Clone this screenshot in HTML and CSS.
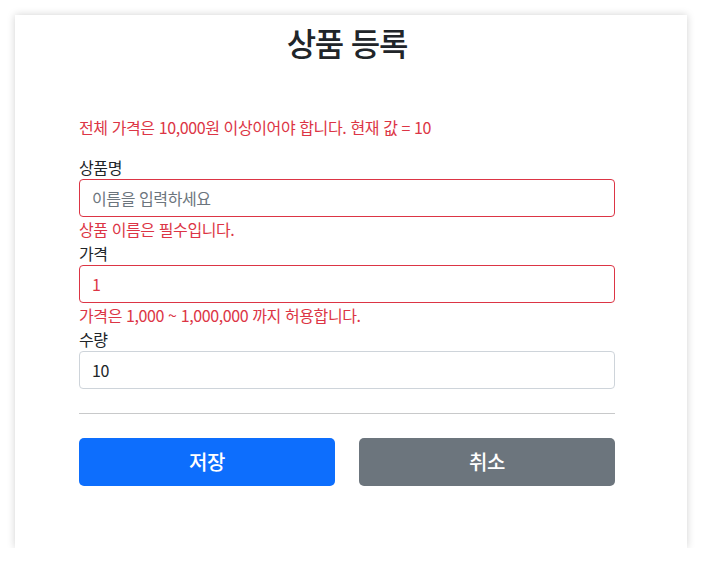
FILE: index.html
```html
<!DOCTYPE html>
<html lang="ko">
<head>
<meta charset="utf-8">
<link rel="stylesheet" href="styles.css">
</head>
<body>
<div class="card">
  <div class="head"><h2 class="title">상품 등록</h2></div>
  <form class="form">
    <p class="global-error">전체 가격은 10,000원 이상이어야 합니다. 현재 값 = 10</p>
    <div class="field">
      <label class="label">상품명</label>
      <input class="control invalid" type="text" placeholder="이름을 입력하세요">
      <div class="error">상품 이름은 필수입니다.</div>
    </div>
    <div class="field">
      <label class="label">가격</label>
      <input class="control invalid" type="text" value="1">
      <div class="error">가격은 1,000 ~ 1,000,000 까지 허용합니다.</div>
    </div>
    <div class="field">
      <label class="label">수량</label>
      <input class="control" type="text" value="10">
    </div>
    <hr class="divider">
    <div class="actions">
      <button class="btn primary" type="button">저장</button>
      <button class="btn secondary" type="button">취소</button>
    </div>
  </form>
</div>
</body>
</html>
```
FILE: styles.css
```css
* { box-sizing: border-box; }
html, body { margin: 0; padding: 0; background: #fff; }
body {
  font-family: "Noto Sans CJK KR", "Noto Sans", sans-serif;
  font-size: 16px;
  line-height: 24px;
  color: #212529;
  padding: 15px 15px 0 15px;
  font-feature-settings: "palt";
  letter-spacing: -0.4px;
}
.card {
  width: 672px;
  height: 533px;
  background: #fff;
  box-shadow: 0 0 8px rgba(0,0,0,0.18);
  padding: 8px 72px 0 64px;
}
.head { text-align: center; }
.title {
  margin: 0;
  font-size: 32px;
  line-height: 38px;
  font-weight: 500;
  letter-spacing: -1.2px;
}
.form { margin-top: 54px; }
.global-error {
  margin: 0 0 16px 0;
  color: #dc3545;
}
.field { display: flex; flex-direction: column; }
.label { display: block; height: 24px; }
.control {
  display: block;
  width: 100%;
  height: 38px;
  padding: 6px 12px;
  font: inherit;
  font-size: 16px;
  line-height: 24px;
  letter-spacing: -0.4px;
  font-feature-settings: "palt";
  color: #212529;
  border: 1px solid #ced4da;
  border-radius: 4px;
  background: #fff;
  outline: none;
}
.control::placeholder { color: #6c757d; }
.control.invalid { border-color: #dc3545; color: #dc3545; }
.error { color: #dc3545; }
.divider {
  margin: 24px 0;
  border: 0;
  border-top: 1px solid #c8c9ca;
  height: 0;
}
.actions {
  display: grid;
  grid-template-columns: 1fr 1fr;
  gap: 24px;
}
.btn {
  height: 48px;
  border: 0;
  border-radius: 5px;
  color: #fff;
  font-family: inherit;
  font-size: 20px;
  line-height: 30px;
  font-weight: 500;
  letter-spacing: -0.5px;
  font-feature-settings: "palt";
}
.btn.primary { background: #0d6efd; }
.btn.secondary { background: #6c757d; }
```
